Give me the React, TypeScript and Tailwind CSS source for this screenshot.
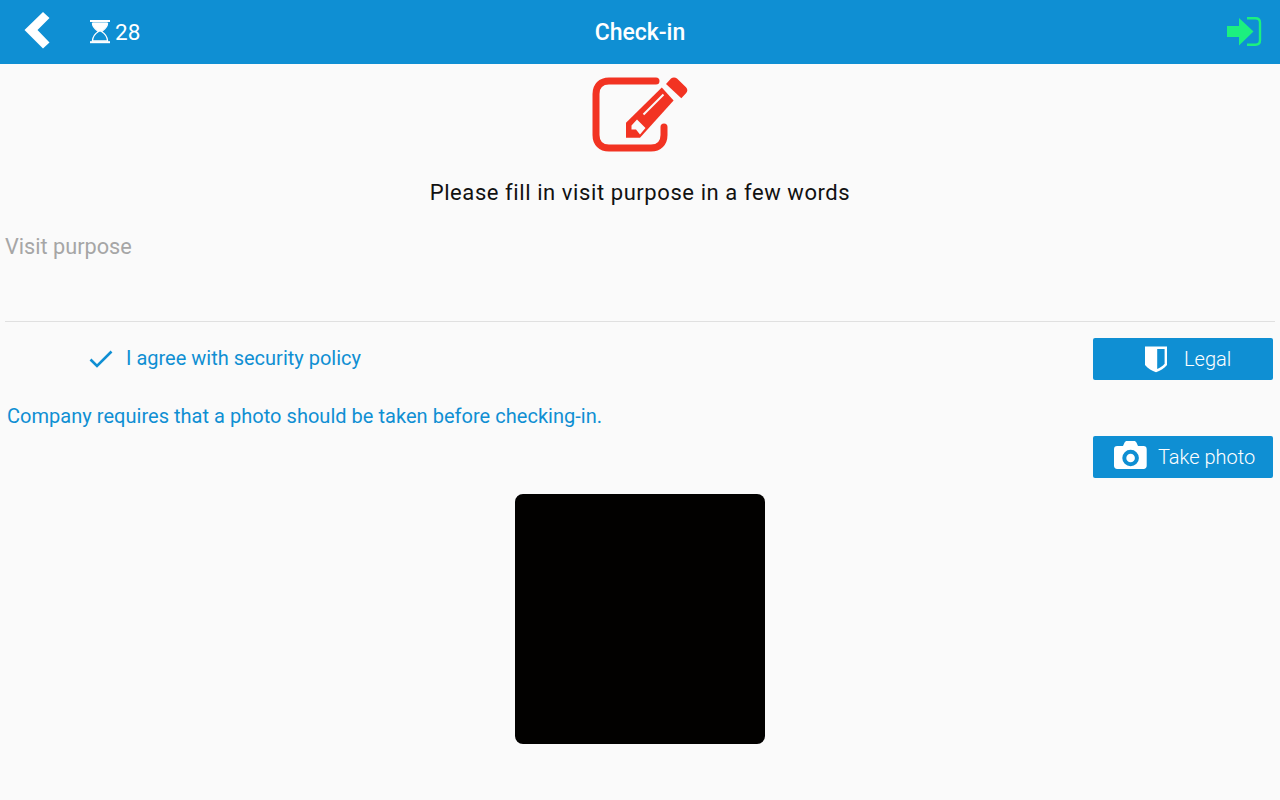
import React from "react";

function Back() {
  return (
    <svg width="26" height="38" viewBox="24 11 26 38" className="block">
      <polygon points="24.5,30 43,12 49.5,18 37.5,30 49.5,42.5 43,48.5" fill="#fff" />
    </svg>
  );
}

function Hourglass() {
  return (
    <svg width="20" height="24" viewBox="90 20 20 24" className="block">
      <rect x="90" y="20" width="20" height="2" fill="#fff" />
      <rect x="90" y="41.2" width="20" height="2" fill="#fff" />
      <path d="M92.5 23.5H107.5C107.5 27.5 104 29.5 101.5 31.5C104.8 33.5 107.3 37 107.6 41H92.4C92.7 37 95.2 33.5 98.5 31.5C96 29.5 92.5 27.5 92.5 23.5Z" fill="none" stroke="#fff" strokeWidth="1.3" />
      <path d="M92.5 22.5H107.5C107.5 27.5 103 30 100 32C97 30 92.5 27.5 92.5 22.5Z" fill="#fff" />
    </svg>
  );
}

function SignIn() {
  return (
    <svg width="36" height="32" viewBox="1226 16 36 32" className="block">
      <polygon points="1227,26 1239,26 1239,18 1253.5,31.5 1239,45.5 1239,37 1227,37" fill="#1cf07f" />
      <path d="M1247 18.2H1255.5C1258.4 18.2 1260 19.8 1260 22.7V40.3C1260 43.2 1258.4 44.8 1255.5 44.8H1247" fill="none" stroke="#1cf07f" strokeWidth="2.4" />
    </svg>
  );
}

function Edit() {
  return (
    <svg width="96" height="76" viewBox="592 77 96 76" className="block">
      <path d="M656 81H609C601 81 596 86 596 94V135C596 143 601 148 609 148H651C659 148 664 143 664 135V127" fill="none" stroke="#f23322" strokeWidth="7" strokeLinecap="round" />
      <polygon points="626,122.8 661.8,87.5 673.6,100.6 640,137.8 626,137.8" fill="#f23322" />
      <path d="M666 84L671 78.6C672.6 77.2 675.4 77.2 677 78.6L686 87.3C687.8 89 687.8 91.6 686 93.2L681.3 98.2Z" fill="#f23322" />
      <line x1="643.5" y1="114.5" x2="663.5" y2="94.5" stroke="#fafafa" strokeWidth="2" />
      <polygon points="631.5,125.5 637,119.5 645.5,128 640,134.5 636,129.5 631.5,129.5" fill="#fafafa" />
    </svg>
  );
}

function Shield() {
  return (
    <svg width="24" height="27" viewBox="1144 345 24 27" className="block">
      <path d="M1145 345.6H1167V364C1164 367.5 1160 369.8 1156 371.2C1152 369.8 1148 367.5 1145 364Z" fill="#fff" />
      <path d="M1157.2 348H1164.6V362.8C1162.6 365.2 1160 366.8 1157.2 368Z" fill="#0f8fd3" />
    </svg>
  );
}

function Camera() {
  return (
    <svg width="33" height="29" viewBox="1114 441 33 29" className="mt-[-3px] block">
      <path d="M1123 446L1124.6 442.6C1125 441.7 1125.8 441 1127 441H1134C1135.2 441 1136 441.7 1136.4 442.6L1138 446H1143.5C1145.5 446 1146.7 447.2 1146.7 449.2V465.8C1146.7 467.8 1145.5 469 1143.5 469H1117.2C1115.2 469 1114 467.8 1114 465.8V449.2C1114 447.2 1115.2 446 1117.2 446Z" fill="#fff" />
      <circle cx="1130.6" cy="458" r="6.3" fill="none" stroke="#0f8fd3" strokeWidth="4" />
    </svg>
  );
}

function Check() {
  return (
    <svg width="24" height="18" viewBox="89 349 24 18" className="block">
      <path d="M90.5 358.5L97 365L111.5 350.5" fill="none" stroke="#0f8fd3" strokeWidth="2.6" />
    </svg>
  );
}

export default function App() {
  return (
    <div className="flex h-[800px] w-[1280px] flex-col overflow-hidden bg-[#fafafa] font-['Roboto',sans-serif]">
      <header className="flex h-16 shrink-0 items-center justify-between bg-[#0f8fd3] text-white">
        <div className="flex items-center">
          <div className="ml-6 mt-[-4px]"><Back /></div>
          <div className="ml-10 flex items-center gap-[5px]">
            <Hourglass />
            <span className="text-[22.5px] leading-none">28</span>
          </div>
        </div>
        <h1 className="absolute left-0 right-0 top-[19px] text-center text-[23px] font-medium leading-[28px]">Check-in</h1>
        <div className="mr-[18px]"><SignIn /></div>
      </header>

      <div className="mt-[13px] flex justify-center"><Edit /></div>
      <p className="mt-[26px] text-center text-[22px] leading-[28px] tracking-[0.58px] text-[#111111]">Please fill in visit purpose in a few words</p>

      <div className="mx-[5px] mt-[26px] h-[89px] border-b border-[#e0e0e0] text-[21.7px] leading-[28px] text-[#a6a6a6]">Visit purpose</div>

      <div className="mt-4 flex h-[42px] items-center justify-between pr-[7px]">
        <div className="ml-[89px] flex items-center gap-[13px] text-[20px] text-[#0f8fd3]">
          <Check />
          <span className="mt-[-2px]">I agree with security policy</span>
        </div>
        <button className="flex h-[42px] w-[180px] items-center rounded-[2px] bg-[#0f8fd3] pl-[51px] text-[20px] font-light text-white">
          <Shield />
          <span className="ml-[16px]">Legal</span>
        </button>
      </div>

      <p className="ml-[7px] mt-[22px] text-[20px] leading-[28px] tracking-[0.03px] text-[#0f8fd3]">Company requires that a photo should be taken before checking-in.</p>

      <div className="mt-[6px] flex justify-end pr-[7px]">
        <button className="flex h-[42px] w-[180px] items-center rounded-[2px] bg-[#0f8fd3] pl-[21px] text-[20px] font-light text-white">
          <Camera />
          <span className="ml-[11px]">Take photo</span>
        </button>
      </div>

      <div className="mt-4 flex justify-center">
        <div className="h-[250px] w-[250px] rounded-lg bg-[#020100]" />
      </div>
    </div>
  );
}
